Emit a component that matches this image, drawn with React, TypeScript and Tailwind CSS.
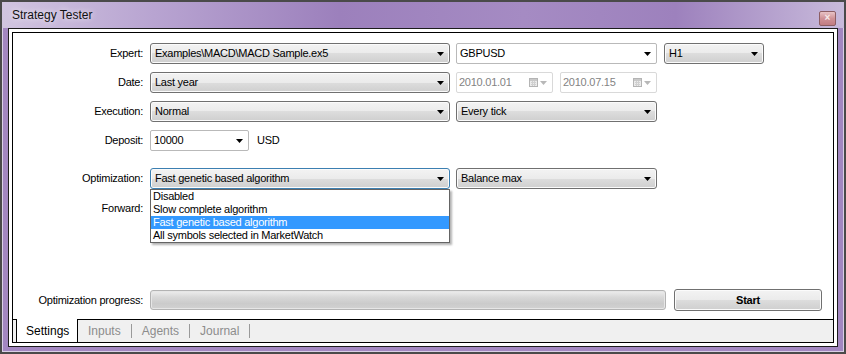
import React from 'react';

type Kind = 'btn' | 'edit' | 'focus' | 'date';

const kinds: Record<Kind, string> = {
  btn: 'rounded-[3px] border-[#707070] bg-[linear-gradient(#f3f3f3_0%,#ebebeb_50%,#dddddd_50%,#cfcfcf_100%)] shadow-[inset_0_0_0_1px_#fbfbfb] pl-[4px] text-black',
  focus: 'rounded-[3px] border-[#3c7fb1] bg-[linear-gradient(#f3f3f3_0%,#ebebeb_50%,#dddddd_50%,#cfcfcf_100%)] shadow-[inset_0_0_0_1px_#fbfbfb] pl-[4px] text-black',
  edit: 'rounded-[2px] border-[#b9b9b9] bg-white pl-[3px] text-black',
  date: 'rounded-[2px] border-[#d9d9d9] bg-white pl-[2px] text-[#838383]',
};

const Arrow = ({ color = '#000' }: { color?: string }) => (
  <svg width="7" height="4" viewBox="0 0 7 4" className="shrink-0">
    <path d="M0 0h7L3.5 4z" fill={color} />
  </svg>
);

const Calendar = () => (
  <div className="flex items-center gap-[2px]">
    <svg width="9" height="9" viewBox="0 0 9 9">
      <rect x="0.5" y="0.5" width="8" height="8" fill="#ececec" stroke="#b4b4b4" />
      <rect x="1" y="1" width="7" height="2" fill="#c9c9c9" />
      <path d="M2 4.5h5M2 6.5h5M3.5 3v5M5.5 3v5" stroke="#d0d0d0" strokeWidth="1" />
    </svg>
    <Arrow color="#b8b8b8" />
  </div>
);

const Combo = ({ text, className, kind = 'btn' }: { text: string; className: string; kind?: Kind }) => (
  <div className={`flex h-[21px] items-center justify-between border pr-[5px] ${kinds[kind]} ${className}`}>
    <span className="whitespace-nowrap">{text}</span>
    {kind === 'date' ? <Calendar /> : <Arrow />}
  </div>
);

const Label = ({ children }: { children: React.ReactNode }) => (
  <div className="mr-[7px] w-[130px] shrink-0 whitespace-nowrap text-right text-black">{children}</div>
);

const options = ['Disabled', 'Slow complete algorithm', 'Fast genetic based algorithm', 'All symbols selected in MarketWatch'];

const App: React.FC = () => {
  return (
    <div className="h-[354px] w-[846px] overflow-hidden border-2 border-[#4a4a4a] bg-[#a387c1] px-[6px] pb-[5px] font-['Liberation_Sans',Arial,sans-serif] shadow-[inset_0_0_0_1px_#d9cfe6]">
      {/* Title bar */}
      <div className="-mx-[6px] flex h-[26px] items-center justify-between bg-[linear-gradient(90deg,#d1c5e0_0%,#b8a4d1_18%,#9c80bc_40%,#a58bc3_62%,#9d81bd_80%,#c8badb_100%)] pl-[10px] pr-[8px]">
        <span className="text-[12px] text-[#111] [text-shadow:0_0_6px_#ffffff]">Strategy Tester</span>
        <div className="mt-[6px] flex h-[15px] w-[17px] items-center justify-center rounded-[2px] border border-[#8d5e64] bg-[linear-gradient(#e8c3c6,#cf9196_50%,#c27c82)] text-[10px] font-bold leading-none text-[#f7eaea]">
          ×
        </div>
      </div>

      {/* Outer frame */}
      <div className="h-[319px] w-[830px] border border-[#1c1c1c] bg-white p-[3px]">
        <div className="flex h-[311px] w-[822px] flex-col border border-black bg-white text-[11px] tracking-[-0.25px]">
          {/* Settings content */}
          <div className="flex flex-1 flex-col pb-[8px] pt-[10px]">
            <div className="flex items-center">
              <Label>Expert:</Label>
              <Combo text="Examples\MACD\MACD Sample.ex5" className="w-[300px]" />
              <Combo text="GBPUSD" kind="edit" className="ml-[6px] w-[201px]" />
              <Combo text="H1" className="ml-[7px] w-[100px]" />
            </div>

            <div className="mt-[8px] flex items-center">
              <Label>Date:</Label>
              <Combo text="Last year" className="w-[300px]" />
              <Combo text="2010.01.01" kind="date" className="ml-[6px] w-[97px]" />
              <Combo text="2010.07.15" kind="date" className="ml-[7px] w-[97px]" />
            </div>

            <div className="mt-[8px] flex items-center">
              <Label>Execution:</Label>
              <Combo text="Normal" className="w-[300px]" />
              <Combo text="Every tick" className="ml-[6px] w-[201px]" />
            </div>

            <div className="mt-[8px] flex items-center">
              <Label>Deposit:</Label>
              <Combo text="10000" kind="edit" className="w-[99px]" />
              <span className="ml-[8px]">USD</span>
            </div>

            <div className="mt-[17px] flex items-center">
              <Label>Optimization:</Label>
              <div className="relative">
                <Combo text="Fast genetic based algorithm" kind="focus" className="w-[300px]" />
                <div className="absolute left-0 top-[21px] z-10 w-[300px] border border-[#646464] bg-white shadow-[2px_2px_2px_rgba(0,0,0,0.3)]">
                  {options.map((o, i) => (
                    <div
                      key={o}
                      className={`flex h-[13px] items-center pl-[2px] leading-none ${
                        i === 2 ? 'bg-[#3399ff] text-white' : 'text-black'
                      }`}
                    >
                      {o}
                    </div>
                  ))}
                </div>
              </div>
              <Combo text="Balance max" className="ml-[6px] w-[201px]" />
            </div>

            <div className="mt-[9px] flex h-[21px] items-center">
              <Label>Forward:</Label>
            </div>

            <div className="flex-1" />

            <div className="flex items-center">
              <Label>Optimization progress:</Label>
              <div className="h-[20px] w-[516px] rounded-[3px] border border-[#b3b3b3] bg-[linear-gradient(#eeeeee,#d8d8d8_35%,#cbcbcb_70%,#d2d2d2)] shadow-[inset_0_0_0_1px_#e6e6e6]" />
              <button className="ml-[8px] flex h-[22px] w-[148px] items-center justify-center rounded-[3px] border border-[#707070] bg-[linear-gradient(#f3f3f3_0%,#ebebeb_50%,#dddddd_50%,#cfcfcf_100%)] text-[11px] font-bold text-black shadow-[inset_0_0_0_1px_#fbfbfb]">
                Start
              </button>
            </div>
          </div>

          {/* Tabs */}
          <div className="flex h-[23px] items-stretch border-t border-black bg-[#f0f0f0] text-[12px] tracking-normal">
            <div className="-mt-px ml-[3px] flex w-[62px] items-center border-x border-black bg-white pl-[9px] text-black">
              Settings
            </div>
            {['Inputs', 'Agents', 'Journal'].map((t) => (
              <div key={t} className="flex items-center">
                <span className="ml-[10px] text-[#8c8c8c]">{t}</span>
                <span className="ml-[10px] h-[14px] w-px bg-[#9a9a9a]" />
              </div>
            ))}
          </div>
        </div>
      </div>
    </div>
  );
};

export default App;
